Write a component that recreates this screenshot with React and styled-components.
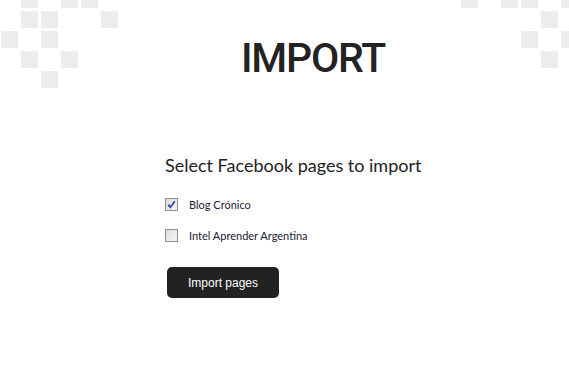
import React from 'react';
import styled, { createGlobalStyle } from 'styled-components';

const GlobalStyle = createGlobalStyle`
  body {
    margin: 0;
    background: #fff;
  }
`;

// decorative squares, [column, row] on a 20px grid
const squares = [
  [1, 0], [3, 0], [4, 0], [1, 1], [2, 1], [5, 1], [0, 2], [2, 2], [1, 3], [3, 3], [2, 4],
  [23, 0], [25, 0], [26, 0], [28, 0], [27, 1], [26, 2], [28, 2], [27, 3],
];

const pages = [
  { name: 'Blog Crónico', checked: true },
  { name: 'Intel Aprender Argentina', checked: false },
];

const ImportPage = () => {
  return (
    <Page>
      <GlobalStyle />
      <Pattern width='569' height='90' viewBox='0 0 569 90'>
        {squares.map(([c, r]) => (
          <rect key={`${c}-${r}`} x={1 + c * 20} y={-9 + r * 20} width='17' height='17' fill='#ececec' />
        ))}
      </Pattern>
      <Header>
        <Title>IMPORT</Title>
      </Header>
      <Content>
        <Subtitle>Select Facebook pages to import</Subtitle>
        <List>
          {pages.map((p) => (
            <Row key={p.name}>
              <Box>
                {p.checked && (
                  <svg width='9' height='9' viewBox='0 0 9 9'>
                    <path d='M1.2 4.6 L3.4 7.2 L7.8 1.2' stroke='#2d4fa3' strokeWidth='1.8' fill='none' />
                  </svg>
                )}
              </Box>
              <Label>{p.name}</Label>
            </Row>
          ))}
        </List>
        <Button>Import pages</Button>
      </Content>
    </Page>
  );
};

// Styled Components
const Page = styled.div`
  position: relative;
  min-height: 373px;
`;

const Pattern = styled.svg`
  position: absolute;
  top: 0;
  left: 0;
  z-index: 0;
`;

const Header = styled.header`
  position: relative;
  z-index: 1;
  padding: 34px 0 0 57px;
  text-align: center;
`;

const Title = styled.h1`
  margin: 0;
  font-family: Roboto, 'Liberation Sans', sans-serif;
  font-weight: 500;
  font-size: 41px;
  line-height: 49px;
  letter-spacing: -1.2px;
  color: #232323;
`;

const Content = styled.main`
  padding: 71px 0 0 165px;
`;

const Subtitle = styled.h2`
  margin: 0;
  font-family: Lato, 'Open Sans', sans-serif;
  font-weight: 400;
  font-size: 18px;
  line-height: 22px;
  color: #222;
`;

const List = styled.div`
  display: flex;
  flex-direction: column;
  gap: 18px;
  margin-top: 22px;
`;

const Row = styled.label`
  display: flex;
  align-items: center;
  gap: 11px;
  height: 13px;
`;

const Box = styled.span`
  display: flex;
  align-items: center;
  justify-content: center;
  width: 11px;
  height: 11px;
  border: 1px solid #8e8f8f;
  background: linear-gradient(135deg, #dcdcdc, #f6f6f6);
`;

const Label = styled.span`
  font-family: Lato, 'Open Sans', sans-serif;
  font-size: 11px;
  line-height: 13px;
  color: #1b2035;
`;

const Button = styled.button`
  margin: 25px 0 0 2px;
  width: 112px;
  height: 31px;
  border: none;
  border-radius: 5px;
  background: #222;
  color: #fff;
  font-family: 'Liberation Sans', Arial, sans-serif;
  font-size: 12px;
  cursor: pointer;
`;

export default ImportPage;
